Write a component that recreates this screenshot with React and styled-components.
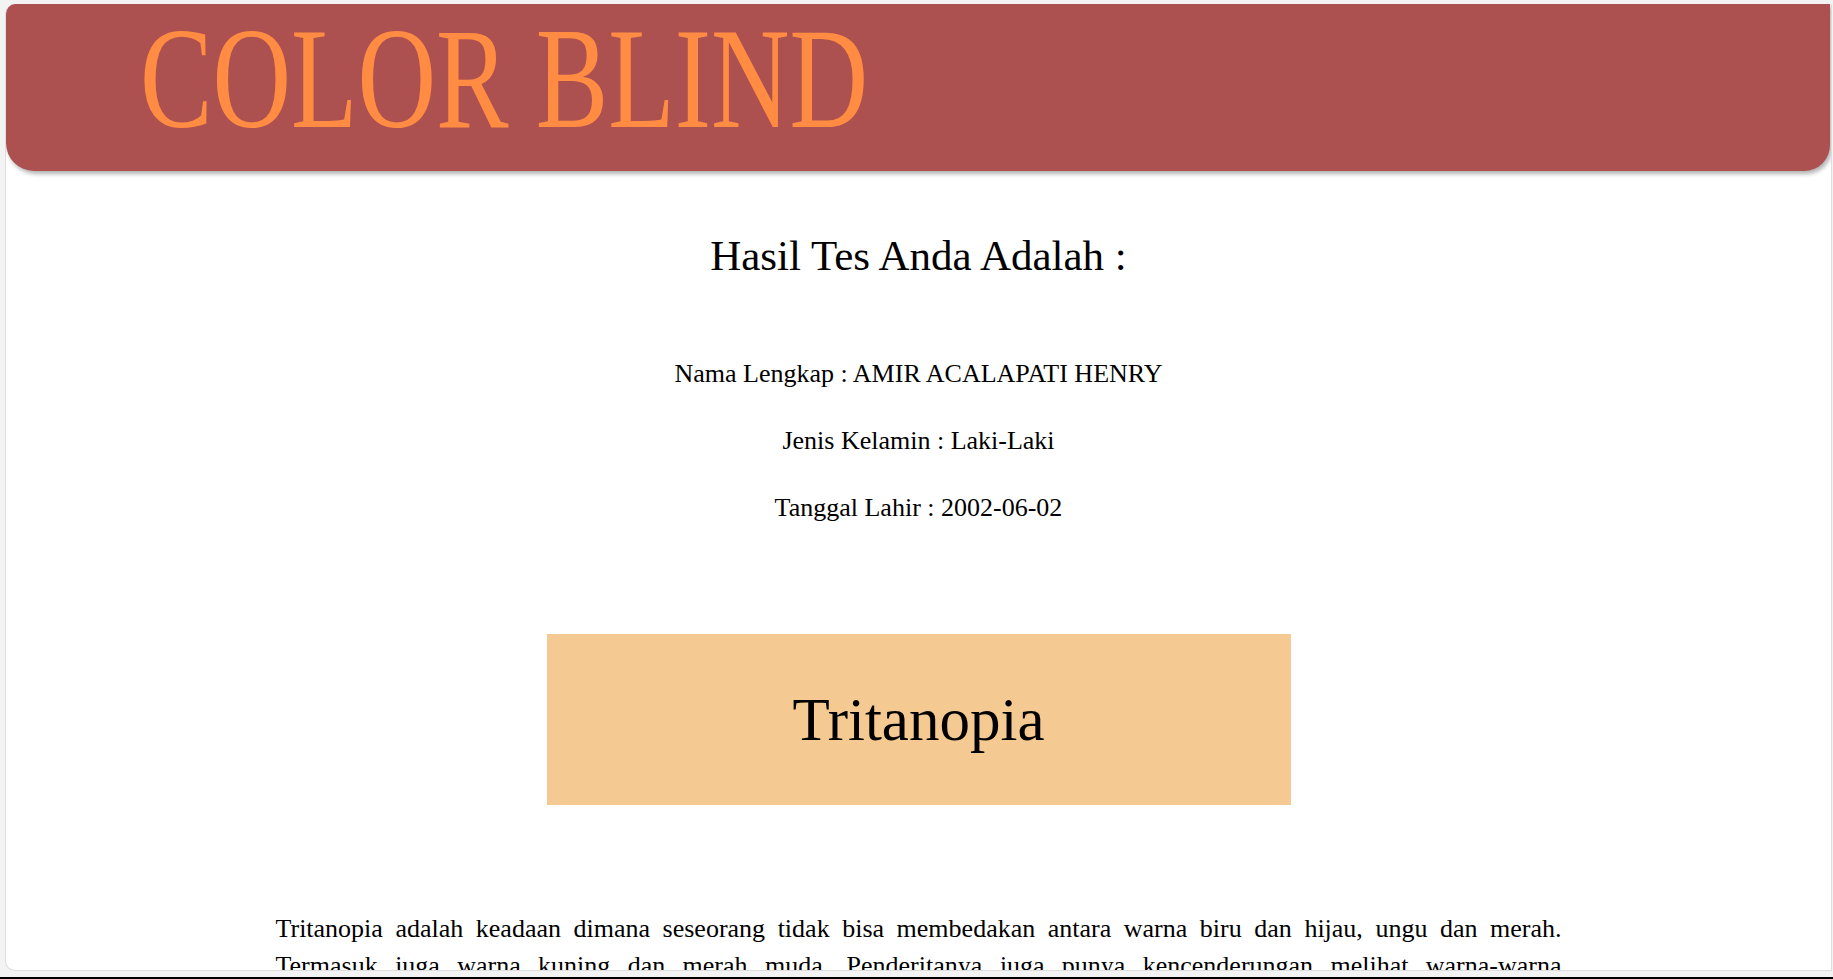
import React from 'react';
import styled, { createGlobalStyle } from 'styled-components';

const GlobalStyle = createGlobalStyle`
  html, body {
    margin: 0;
    padding: 0;
    height: 979px;
    overflow: hidden;
    background: #f3f3f3;
    font-family: 'Liberation Serif', 'Times New Roman', serif;
    color: #000000;
  }

  #root {
    display: flex;
    flex-direction: column;
    height: 100%;
  }
`;

const Frame = styled.div`
  box-sizing: border-box;
  height: 967px;
  margin: 4px 1px 0 5px;
  background: #ffffff;
  border: 1px solid #dedede;
  border-top: none;
  border-radius: 10px 0 0 10px;
  overflow: hidden;
  display: flex;
  flex-direction: column;
`;

const Header = styled.header`
  box-sizing: border-box;
  flex-shrink: 0;
  height: 167px;
  margin-right: 1px;
  padding: 3px 0 0 134px;
  background: #ad5050;
  border-radius: 0 0 26px 28px;
  box-shadow: 2px 3px 4px rgba(0, 0, 0, 0.3);
`;

const Logo = styled.h1`
  width: 680px;
  margin: 0;
  font-family: 'Liberation Serif', 'Times New Roman', serif;
  font-size: 100px;
  font-weight: 400;
  line-height: 100px;
  color: #ff8c42;
  white-space: nowrap;
  transform: scale(1.0875, 1.45);
  transform-origin: left top;
`;

const Result = styled.main`
  display: flex;
  flex-direction: column;
  align-items: center;
`;

const Title = styled.h2`
  margin: 60px 0 0;
  font-size: 43px;
  font-weight: 400;
  line-height: 50px;
`;

const InfoList = styled.div`
  display: flex;
  flex-direction: column;
  align-items: center;
  gap: 31px;
  margin-top: 75px;
`;

const InfoRow = styled.p`
  margin: 0;
  font-size: 26px;
  line-height: 36px;
`;

const Diagnosis = styled.div`
  box-sizing: border-box;
  width: 744px;
  height: 171px;
  margin-top: 108px;
  background: #f5c992;
  display: flex;
  align-items: center;
  justify-content: center;
  font-size: 61px;
  line-height: 70px;
`;

const Description = styled.p`
  width: 1286px;
  margin: 105px 0 0;
  font-size: 26px;
  line-height: 37px;
  text-align: justify;
`;

const BottomEdge = styled.div`
  flex-shrink: 0;
  height: 2px;
  margin-top: 6px;
  background: #000000;
`;

const info = [
  { label: 'Nama Lengkap', value: 'AMIR ACALAPATI HENRY' },
  { label: 'Jenis Kelamin', value: 'Laki-Laki' },
  { label: 'Tanggal Lahir', value: '2002-06-02' },
];

function App() {
  return (
    <>
      <GlobalStyle />
      <Frame>
        <Header>
          <Logo>COLOR BLIND</Logo>
        </Header>
        <Result>
          <Title>Hasil Tes Anda Adalah :</Title>
          <InfoList>
            {info.map((item) => (
              <InfoRow key={item.label}>{item.label} : {item.value}</InfoRow>
            ))}
          </InfoList>
          <Diagnosis>Tritanopia</Diagnosis>
          <Description>
            Tritanopia adalah keadaan dimana seseorang tidak bisa membedakan antara warna biru dan hijau, ungu dan merah.
            Termasuk juga warna kuning dan merah muda. Penderitanya juga punya kencenderungan melihat warna-warna
            menyimpang dari warna aslinya.
          </Description>
        </Result>
      </Frame>
      <BottomEdge />
    </>
  );
}

export default App;
